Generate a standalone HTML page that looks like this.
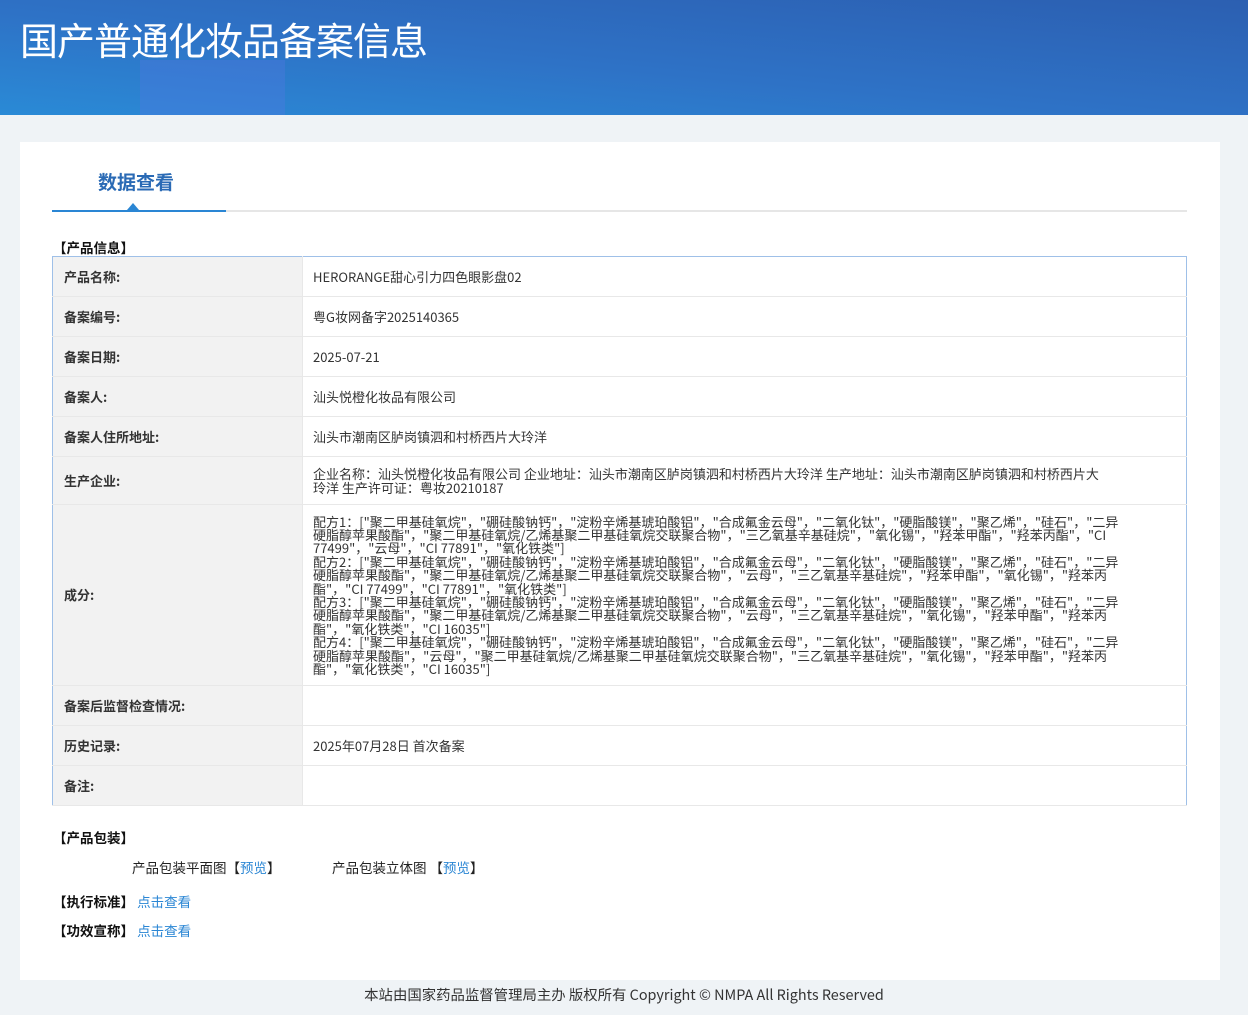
<!DOCTYPE html>
<html><head><meta charset="utf-8"><style>
*{margin:0;padding:0;box-sizing:border-box}
body{width:1248px;height:1015px;background:#eff3f6;font-family:"Noto Sans CJK SC","Liberation Sans",sans-serif;color:#333;position:relative;overflow:hidden}
.hd{position:absolute;left:0;top:0;width:1248px;height:115px;background:linear-gradient(to top right,#2a8ad6 0%,#2e72c6 45%,#2c5fb1 100%);overflow:hidden}
.hd .s1{position:absolute;left:140px;top:60px;width:145px;height:60px;background:rgba(90,120,230,.3)}
.hd h1{position:absolute;left:20px;top:14px;font-size:38px;line-height:50px;font-weight:normal;color:#fff;letter-spacing:-1px}
.card{position:absolute;left:20px;top:142px;width:1200px;height:838px;background:#fff}
.tab{position:absolute;left:78px;top:26px;font-size:19px;line-height:28px;font-weight:bold;color:#2a6ab5}
.line{position:absolute;left:32px;top:68px;width:1135px;height:2px;background:#e6e6e6}
.line i{position:absolute;left:0;top:0;width:174px;height:2px;background:#2a86d4}
.tri{position:absolute;left:107px;top:61px;width:0;height:0;border-left:6px solid transparent;border-right:6px solid transparent;border-bottom:7px solid #2a86d4}
.sec{position:absolute;left:33px;font-size:13.5px;line-height:18px;font-weight:bold;color:#111}
table{position:absolute;left:32px;top:114px;width:1135px;border-collapse:collapse;border:1px solid #9fc0e8;font-size:13px;line-height:18px}
td{border-bottom:1px solid #e8e8e8;vertical-align:middle}
td.l{width:250px;background:#f2f2f2;font-weight:bold;padding-left:11px;border-right:1px solid #e8e8e8;color:#333}
td.v{padding:0 55px 0 10px;color:#333}
tr{height:40px}
.ing{line-height:13.4px}
a{color:#2a86d4;text-decoration:none}
.ft{position:absolute;left:0;top:985px;width:1248px;text-align:center;font-size:14.4px;line-height:20px;color:#333}
</style></head><body>
<div class="hd"><div class="s1"></div><h1>国产普通化妆品备案信息</h1></div>
<div class="card">
<div class="tab">数据查看</div>
<div class="line"><i></i></div><div class="tri"></div>
<div class="sec" style="top:96px">【产品信息】</div>
<table>
<tr><td class="l">产品名称:</td><td class="v">HERORANGE甜心引力四色眼影盘02</td></tr>
<tr><td class="l">备案编号:</td><td class="v">粤G妆网备字2025140365</td></tr>
<tr><td class="l">备案日期:</td><td class="v">2025-07-21</td></tr>
<tr><td class="l">备案人:</td><td class="v">汕头悦橙化妆品有限公司</td></tr>
<tr><td class="l">备案人住所地址:</td><td class="v">汕头市潮南区胪岗镇泗和村桥西片大玲洋</td></tr>
<tr style="height:48px"><td class="l">生产企业:</td><td class="v ing">企业名称：汕头悦橙化妆品有限公司 企业地址：汕头市潮南区胪岗镇泗和村桥西片大玲洋 生产地址：汕头市潮南区胪岗镇泗和村桥西片大<br>玲洋 生产许可证：粤妆20210187</td></tr>
<tr style="height:181px"><td class="l">成分:</td><td class="v ing">配方1：["聚二甲基硅氧烷"，"硼硅酸钠钙"，"淀粉辛烯基琥珀酸铝"，"合成氟金云母"，"二氧化钛"，"硬脂酸镁"，"聚乙烯"，"硅石"，"二异硬脂醇苹果酸酯"，"聚二甲基硅氧烷/乙烯基聚二甲基硅氧烷交联聚合物"，"三乙氧基辛基硅烷"，"氧化锡"，"羟苯甲酯"，"羟苯丙酯"，"CI 77499"，"云母"，"CI 77891"，"氧化铁类"]<br>配方2：["聚二甲基硅氧烷"，"硼硅酸钠钙"，"淀粉辛烯基琥珀酸铝"，"合成氟金云母"，"二氧化钛"，"硬脂酸镁"，"聚乙烯"，"硅石"，"二异硬脂醇苹果酸酯"，"聚二甲基硅氧烷/乙烯基聚二甲基硅氧烷交联聚合物"，"云母"，"三乙氧基辛基硅烷"，"羟苯甲酯"，"氧化锡"，"羟苯丙酯"，"CI 77499"，"CI 77891"，"氧化铁类"]<br>配方3：["聚二甲基硅氧烷"，"硼硅酸钠钙"，"淀粉辛烯基琥珀酸铝"，"合成氟金云母"，"二氧化钛"，"硬脂酸镁"，"聚乙烯"，"硅石"，"二异硬脂醇苹果酸酯"，"聚二甲基硅氧烷/乙烯基聚二甲基硅氧烷交联聚合物"，"云母"，"三乙氧基辛基硅烷"，"氧化锡"，"羟苯甲酯"，"羟苯丙酯"，"氧化铁类"，"CI 16035"]<br>配方4：["聚二甲基硅氧烷"，"硼硅酸钠钙"，"淀粉辛烯基琥珀酸铝"，"合成氟金云母"，"二氧化钛"，"硬脂酸镁"，"聚乙烯"，"硅石"，"二异硬脂醇苹果酸酯"，"云母"，"聚二甲基硅氧烷/乙烯基聚二甲基硅氧烷交联聚合物"，"三乙氧基辛基硅烷"，"氧化锡"，"羟苯甲酯"，"羟苯丙酯"，"氧化铁类"，"CI 16035"]</td></tr>
<tr><td class="l">备案后监督检查情况:</td><td class="v"></td></tr>
<tr><td class="l">历史记录:</td><td class="v">2025年07月28日 首次备案</td></tr>
<tr><td class="l">备注:</td><td class="v"></td></tr>
</table>
<div class="sec" style="top:686px">【产品包装】</div>
<div style="position:absolute;left:112px;top:716px;font-size:13.5px;line-height:18px;color:#222">产品包装平面图【<a>预览</a>】</div>
<div style="position:absolute;left:312px;top:716px;font-size:13.5px;line-height:18px;color:#222">产品包装立体图 【<a>预览</a>】</div>
<div class="sec" style="top:750px">【执行标准】 <a style="font-weight:normal">点击查看</a></div>
<div class="sec" style="top:779px">【功效宣称】 <a style="font-weight:normal">点击查看</a></div>
</div>
<div class="ft">本站由国家药品监督管理局主办 版权所有 Copyright © NMPA All Rights Reserved</div>
</body></html>
